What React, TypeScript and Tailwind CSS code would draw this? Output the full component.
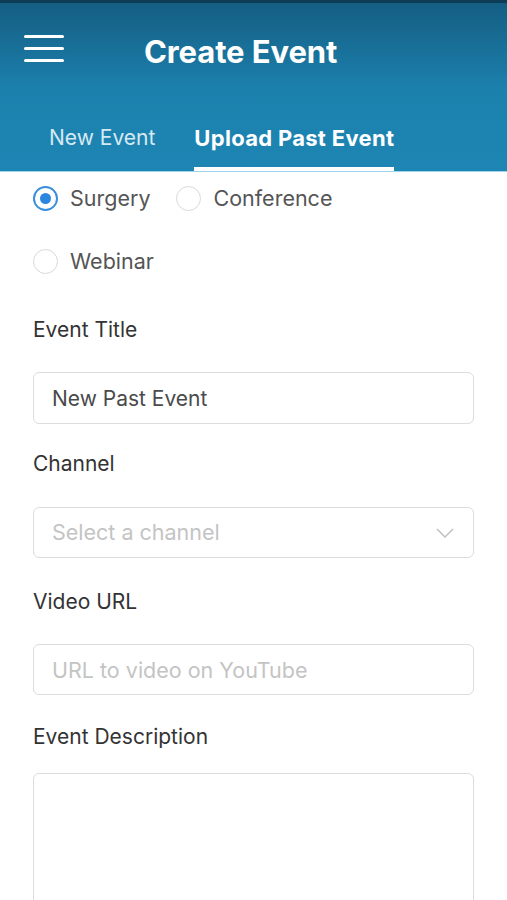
import React, { useState } from 'react';

const font = { fontFamily: 'Inter, "Liberation Sans", sans-serif' };

const Radio: React.FC<{ label: string; checked: boolean; onSelect: () => void }> = ({ label, checked, onSelect }) => (
    <button type="button" onClick={onSelect} className="flex items-center gap-[12px] h-[30px]">
        {checked ? (
            <span className="w-[25px] h-[25px] rounded-full border-2 border-[#3a8fdc] flex items-center justify-center">
                <span className="w-[11px] h-[11px] rounded-full bg-[#2b86e2]"></span>
            </span>
        ) : (
            <span className="w-[25px] h-[25px] rounded-full border border-[#d9d9d9]"></span>
        )}
        <span className="text-[21.5px] text-[#555] leading-[30px]">{label}</span>
    </button>
);

const App: React.FC = () => {
    const [tab, setTab] = useState<'new' | 'past'>('past');
    const [kind, setKind] = useState('surgery');
    const [title, setTitle] = useState('New Past Event');

    return (
        <div className="w-[507px] h-[900px] overflow-hidden bg-white" style={font}>
            <header className="h-[172px] border-t-[3px] border-[#0e3b56] bg-gradient-to-b from-[#155e83] via-[#1b80ac] to-[#1e86b4] flex flex-col">
                <div className="flex items-start h-[97px] px-[24px]">
                    <div className="flex flex-col gap-[9px] w-[40px] mt-[32px]">
                        <span className="h-[3px] bg-white rounded-sm"></span>
                        <span className="h-[3px] bg-white rounded-sm"></span>
                        <span className="h-[3px] bg-white rounded-sm"></span>
                    </div>
                    <h1 className="ml-[80px] mt-[30px] text-[31px] leading-[38px] font-bold text-white tracking-[-0.1px]">Create Event</h1>
                </div>
                <nav className="flex-1 flex items-end pl-[49px] gap-[39px] border-b border-[#9fd4ec]">
                    <button
                        onClick={() => setTab('new')}
                        className={`h-[71px] pt-[25px] flex items-start leading-[26px] ${tab === 'new' ? 'text-white font-bold text-[22px] tracking-[0.3px] border-b-4 border-white' : 'text-[#d6e9f3] text-[21px] border-b-4 border-transparent'}`}
                    >
                        New Event
                    </button>
                    <button
                        onClick={() => setTab('past')}
                        className={`h-[71px] pt-[25px] flex items-start leading-[26px] ${tab === 'past' ? 'text-white font-bold text-[22px] tracking-[0.3px] border-b-4 border-white' : 'text-[#d6e9f3] text-[21px] border-b-4 border-transparent'}`}
                    >
                        Upload Past Event
                    </button>
                </nav>
            </header>

            <main className="px-[33px]">
                <div className="flex flex-wrap w-[340px] gap-x-[26px] gap-y-[33px] pt-[11px]">
                    <Radio label="Surgery" checked={kind === 'surgery'} onSelect={() => setKind('surgery')} />
                    <Radio label="Conference" checked={kind === 'conference'} onSelect={() => setKind('conference')} />
                    <Radio label="Webinar" checked={kind === 'webinar'} onSelect={() => setKind('webinar')} />
                </div>

                <label className="block mt-[42px] text-[21px] leading-[24px] text-[#333]">Event Title</label>
                <input
                    value={title}
                    onChange={(e) => setTitle(e.target.value)}
                    className="mt-[30px] w-full h-[52px] px-[18px] border border-[#dcdcdc] rounded-[6px] text-[21px] text-[#4a4a4a] outline-none"
                />

                <label className="block mt-[28px] text-[21px] leading-[24px] text-[#333]">Channel</label>
                <div className="mt-[31px] w-full h-[51px] px-[18px] border border-[#dcdcdc] rounded-[6px] flex items-center justify-between">
                    <span className="text-[21.5px] text-[#c4c4c4]">Select a channel</span>
                    <svg width="18" height="10" viewBox="0 0 18 10" fill="none" className="mr-[1px]">
                        <path d="M1 1l8 8 8-8" stroke="#bdbdbd" strokeWidth="1.4" />
                    </svg>
                </div>

                <label className="block mt-[32px] text-[21px] leading-[24px] text-[#333]">Video URL</label>
                <input
                    placeholder="URL to video on YouTube"
                    className="mt-[30px] w-full h-[51px] px-[18px] border border-[#dcdcdc] rounded-[6px] text-[21.5px] text-[#4a4a4a] placeholder:text-[#c4c4c4] outline-none"
                />

                <label className="block mt-[30px] text-[21px] leading-[24px] text-[#333]">Event Description</label>
                <textarea className="mt-[24px] w-full h-[200px] border border-[#dcdcdc] rounded-[6px] resize-none outline-none block"></textarea>
            </main>
        </div>
    );
};

export default App;
